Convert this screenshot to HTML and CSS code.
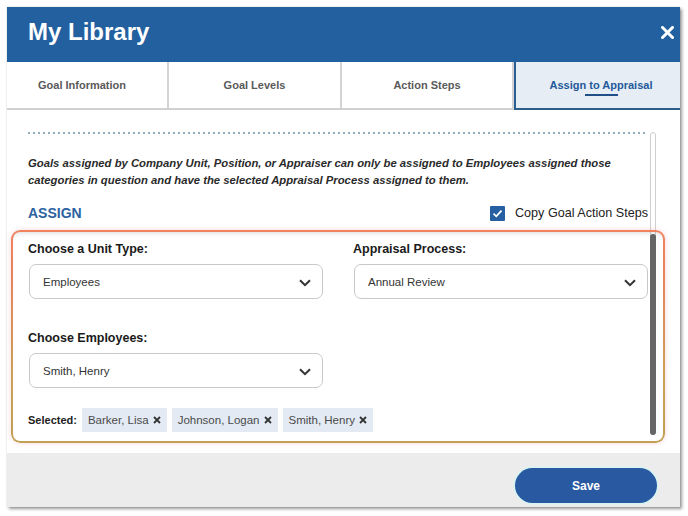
FILE: index.html
```html
<!DOCTYPE html>
<html lang="en">
<head>
<meta charset="utf-8">
<title>My Library</title>
<link rel="stylesheet" href="styles.css">
</head>
<body>
<div class="modal">
  <header class="modal-header">
    <h1 class="modal-title">My Library</h1>
    <button class="close-btn" aria-label="Close">
      <svg width="13" height="13" viewBox="0 0 13 13"><path d="M1.5 1.5 L11.5 11.5 M11.5 1.5 L1.5 11.5" stroke="#fff" stroke-width="3" stroke-linecap="square"/></svg>
    </button>
  </header>
  <nav class="tabs">
    <div class="tab tab-first">Goal Information</div>
    <div class="tab">Goal Levels</div>
    <div class="tab">Action Steps</div>
    <div class="tab tab-active"><span class="tab-label">Assign to Appraisal</span></div>
  </nav>
  <section class="content">
    <div class="content-main">
      <div class="dots"></div>
      <p class="note">Goals assigned by Company Unit, Position, or Appraiser can only be assigned to Employees assigned those categories in question and have the selected Appraisal Process assigned to them.</p>
      <div class="assign-row">
        <h2 class="assign-title">ASSIGN</h2>
        <label class="copy-check">
          <span class="checkbox">
            <svg width="15" height="15" viewBox="0 0 15 15"><path d="M3.5 7.6 L6.3 10.3 L11.5 4.6" fill="none" stroke="#fff" stroke-width="1.8"/></svg>
          </span>
          Copy Goal Action Steps
        </label>
      </div>
      <div class="assign-form">
        <div class="form-grid">
          <div class="field">
            <div class="field-label">Choose a Unit Type:</div>
            <div class="select"><span>Employees</span><svg class="chev" width="12" height="8" viewBox="0 0 12 8"><path d="M1 1.2 L6 6.2 L11 1.2" fill="none" stroke="#333" stroke-width="2"/></svg></div>
          </div>
          <div class="field">
            <div class="field-label">Appraisal Process:</div>
            <div class="select"><span>Annual Review</span><svg class="chev" width="12" height="8" viewBox="0 0 12 8"><path d="M1 1.2 L6 6.2 L11 1.2" fill="none" stroke="#333" stroke-width="2"/></svg></div>
          </div>
          <div class="field field-row2">
            <div class="field-label">Choose Employees:</div>
            <div class="select"><span>Smith, Henry</span><svg class="chev" width="12" height="8" viewBox="0 0 12 8"><path d="M1 1.2 L6 6.2 L11 1.2" fill="none" stroke="#333" stroke-width="2"/></svg></div>
          </div>
        </div>
        <div class="selected-row">
          <span class="selected-label">Selected:</span>
          <span class="chip">Barker, Lisa <svg width="8" height="8" viewBox="0 0 8 8"><path d="M1 1 L7 7 M7 1 L1 7" stroke="#333" stroke-width="1.8"/></svg></span>
          <span class="chip">Johnson, Logan <svg width="8" height="8" viewBox="0 0 8 8"><path d="M1 1 L7 7 M7 1 L1 7" stroke="#333" stroke-width="1.8"/></svg></span>
          <span class="chip">Smith, Henry <svg width="8" height="8" viewBox="0 0 8 8"><path d="M1 1 L7 7 M7 1 L1 7" stroke="#333" stroke-width="1.8"/></svg></span>
        </div>
        <div class="highlight"></div>
      </div>
    </div>
    <div class="scrollbar"><div class="thumb"></div></div>
  </section>
  <footer class="modal-footer">
    <button class="save-btn">Save</button>
  </footer>
</div>
</body>
</html>
```

FILE: styles.css
```css
* { box-sizing: border-box; }
html, body { margin: 0; padding: 0; background: #fff; }
body {
  padding: 7px;
  font-family: "Liberation Sans", Arial, sans-serif;
  color: #222;
}
.modal {
  width: 673px;
  height: 500px;
  display: flex;
  flex-direction: column;
  background: #fff;
  box-shadow: 2px 2px 3px rgba(0,0,0,0.4), 0 0 1px rgba(0,0,0,0.25);
}
.modal-header {
  height: 55px;
  flex: 0 0 55px;
  background: #22609f;
  display: flex;
  align-items: center;
  justify-content: space-between;
  padding: 0 6px 0 21px;
}
.modal-title {
  margin: 0 0 5px 0;
  color: #fff;
  font-size: 24px;
  font-weight: bold;
}
.close-btn {
  background: none;
  border: 0;
  padding: 0;
  margin-bottom: 5px;
  display: flex;
}
.tabs {
  flex: 0 0 48px;
  display: grid;
  grid-template-columns: 162px 173px 172px 1fr;
  border-bottom: 2px solid #d0d0d0;
}
.tab {
  display: flex;
  align-items: center;
  justify-content: center;
  font-size: 11px;
  font-weight: bold;
  color: #5a5a5a;
  border-right: 2px solid #d3d3d3;
}
.tab-first { padding-right: 10px; }
.tab-active {
  border-right: 0;
  background: #e6edf5;
  border-left: 2px solid #2b5f94;
  color: #1f5a9a;
  margin-bottom: -2px;
  border-bottom: 2px solid #2b5f8a;
  padding-left: 6px;
}
.tab-label { position: relative; }
.tab-label::after {
  content: "";
  position: absolute;
  left: 50%;
  margin-left: -16px;
  width: 33px;
  bottom: -5px;
  height: 2px;
  background: #1f4f86;
}
.content {
  flex: 1;
  display: flex;
  padding: 22px 24px 18px 21px;
}
.content-main {
  flex: 1;
  padding-bottom: 3px;
}
.dots {
  height: 2px;
  background: repeating-linear-gradient(to right, #8eaebb 0 2px, transparent 2px 5px);
}
.note {
  margin: 21px 0 0 0;
  font-size: 11.3px;
  line-height: 17px;
  font-style: italic;
  font-weight: bold;
  color: #2a2a2a;
}
.assign-row {
  margin-top: 14px;
  height: 20px;
  display: flex;
  align-items: center;
  justify-content: space-between;
}
.assign-title {
  margin: 0;
  font-size: 14px;
  font-weight: bold;
  color: #2b62a0;
}
.copy-check {
  display: flex;
  align-items: center;
  gap: 10px;
  font-size: 12.6px;
  color: #222;
}
.checkbox {
  width: 15px;
  height: 15px;
  background: #2660a2;
  border-radius: 1px;
  display: flex;
}
.assign-form {
  position: relative;
  margin-top: 18px;
}
.form-grid {
  display: grid;
  grid-template-columns: 295px 295px;
  column-gap: 30px;
  row-gap: 31px;
}
.field-row2 { grid-column: 1; }
.field-label {
  font-size: 12.5px;
  font-weight: bold;
  line-height: 16px;
  margin-bottom: 7px;
  color: #1a1a1a;
}
.select {
  margin-left: 1px;
  height: 35px;
  border: 1px solid #c9c9c9;
  border-radius: 7px;
  display: flex;
  align-items: center;
  justify-content: space-between;
  padding: 0 11px 0 13px;
  font-size: 11.5px;
  color: #333;
}
.chev { margin-top: 2px; }
.selected-row {
  margin-top: 20px;
  display: flex;
  align-items: center;
  gap: 5px;
}
.selected-label {
  font-size: 11px;
  font-weight: bold;
  color: #222;
}
.chip {
  height: 24px;
  display: inline-flex;
  align-items: center;
  gap: 4px;
  padding: 0 6px 0 6px;
  background: #e3eaf4;
  font-size: 11.5px;
  color: #4a4a4a;
}
.highlight {
  position: absolute;
  inset: -11px -17px -11px -17px;
  border: 2px solid transparent;
  border-radius: 9px;
  background: linear-gradient(#f2825e, #e8835f 20%, #c9a156 70%, #c0a052) border-box;
  -webkit-mask: linear-gradient(#000 0 0) padding-box exclude, linear-gradient(#000 0 0);
  mask: linear-gradient(#000 0 0) padding-box exclude, linear-gradient(#000 0 0);
  pointer-events: none;
}
.assign-form::before {
  content: "";
  position: absolute;
  inset: -11px -17px -11px -17px;
  border-radius: 9px;
  box-shadow: 0 0 5px rgba(240,130,140,0.35), inset 0 5px 5px -2px rgba(0,0,0,0.14);
  pointer-events: none;
}
.scrollbar {
  width: 7px;
  margin-left: 2px;
  border: 1px solid #cfcfcf;
  border-radius: 4px;
  display: flex;
  flex-direction: column;
  justify-content: flex-end;
}
.thumb {
  height: 201px;
  margin: 0 -1px -1px -1px;
  background: #666;
  border-radius: 3px;
}
.modal-footer {
  flex: 0 0 54px;
  background: #ececec;
  display: flex;
  justify-content: flex-end;
  align-items: flex-start;
  padding: 15px 23px 0 0;
}
.save-btn {
  width: 142px;
  height: 35px;
  border: 0;
  border-radius: 18px;
  background: #2859a1;
  color: #fff;
  font-family: "Liberation Sans", Arial, sans-serif;
  font-size: 12px;
  font-weight: bold;
  box-shadow: 0 0 0 1.5px #d6f4f2;
}
```
